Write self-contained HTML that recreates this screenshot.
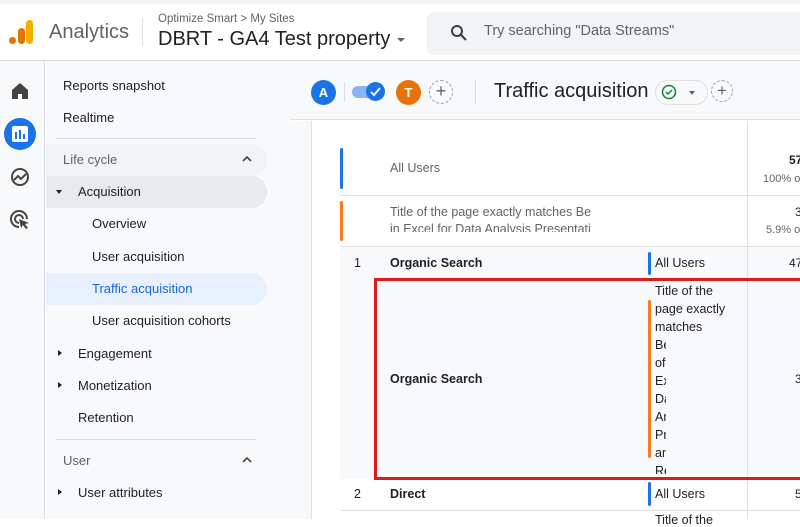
<!DOCTYPE html>
<html><head><meta charset="utf-8">
<style>
*{box-sizing:border-box;margin:0;padding:0}
body{width:800px;height:519px;overflow:hidden;background:#fff;font-family:"Liberation Sans",Arial,sans-serif;color:#202124;position:relative}
.a{position:absolute;white-space:nowrap}
.nav{font-size:13px;color:#202124}
.t{font-size:12.5px}
</style></head><body>
<div class="a" style="left:0;top:0;width:800px;height:4px;background:#f1f3f4"></div>
<div class="a" style="left:0;top:4px;width:800px;height:57px;background:#fff;border-bottom:1px solid #dadce0"></div>
<div class="a" style="left:9px;top:37px;width:7px;height:7px;border-radius:50%;background:#e37400"></div>
<div class="a" style="left:18px;top:28px;width:7px;height:16px;border-radius:3.5px;background:#e37400"></div>
<div class="a" style="left:26px;top:20px;width:7px;height:24px;border-radius:3.5px;background:#f9ab00"></div>
<div class="a" style="left:49px;top:21px;font-size:20px;color:#5f6368">Analytics</div>
<div class="a" style="left:142px;top:18px;width:1px;height:28px;background:#e0e0e0"></div>
<div class="a" style="left:158px;top:13px;font-size:11.5px;color:#5f6368">Optimize Smart &gt; My Sites</div>
<div class="a" style="left:158px;top:28px;font-size:20px;color:#202124">DBRT - GA4 Test property</div>
<div class="a" style="left:397px;top:38px;width:0;height:0;border-left:4px solid transparent;border-right:4px solid transparent;border-top:4px solid #5f6368"></div>
<div class="a" style="left:427px;top:12px;width:380px;height:43px;border-radius:7px;background:#f1f3f4"></div>
<svg class="a" style="left:450px;top:24px" width="18" height="18" viewBox="0 0 18 18"><circle cx="7" cy="7" r="5" fill="none" stroke="#3c4043" stroke-width="2"/><path d="M11 11l5 5" stroke="#3c4043" stroke-width="2.2"/></svg>
<div class="a" style="left:484px;top:23px;font-size:14.5px;color:#5f6368">Try searching "Data Streams"</div>
<div class="a" style="left:0;top:61px;width:45px;height:458px;background:#f8f9fa;border-right:1px solid #dadce0"></div>
<svg class="a" style="left:11px;top:82px" width="18" height="18" viewBox="0 0 18 18"><path d="M9 1L1 8v9h6v-5h4v5h6V8z" fill="#444"/></svg>
<div class="a" style="left:4px;top:118px;width:32px;height:32px;border-radius:50%;background:#1a73e8"></div>
<div class="a" style="left:12px;top:126px;width:16px;height:16px;border-radius:2px;background:#fff"></div>
<div class="a" style="left:15px;top:132px;width:2px;height:7px;background:#1a73e8"></div>
<div class="a" style="left:19px;top:130px;width:2px;height:9px;background:#1a73e8"></div>
<div class="a" style="left:23px;top:134px;width:2px;height:5px;background:#1a73e8"></div>
<svg class="a" style="left:10px;top:167px" width="20" height="20" viewBox="0 0 20 20"><circle cx="10" cy="10" r="8" fill="none" stroke="#444" stroke-width="2"/><path d="M4 13l4-4 3 3 5-5" fill="none" stroke="#444" stroke-width="2"/></svg>
<svg class="a" style="left:10px;top:210px" width="20" height="20" viewBox="0 0 20 20"><path d="M9 17A8 8 0 1 1 17 9" fill="none" stroke="#444" stroke-width="2"/><path d="M9 13A4 4 0 1 1 13 9" fill="none" stroke="#444" stroke-width="2"/><path d="M9 9l10 4-4 1 3 4-2 1-3-4-2 3z" fill="#444"/></svg>
<div class="a" style="left:46px;top:61px;width:244px;height:458px;background:#f8f9fa"></div>
<div class="a nav" style="left:63px;top:78px">Reports snapshot</div>
<div class="a nav" style="left:63px;top:110px">Realtime</div>
<div class="a" style="left:56px;top:138px;width:200px;height:1px;background:#dadce0"></div>
<div class="a" style="left:46px;top:144px;width:221px;height:32px;border-radius:0 16px 16px 0;background:#f1f3f4"></div>
<div class="a nav" style="left:63px;top:152px;color:#5f6368">Life cycle</div>
<svg class="a" style="left:242px;top:155px" width="10" height="7" viewBox="0 0 10 7"><path d="M1 6l4-4 4 4" fill="none" stroke="#444" stroke-width="1.6"/></svg>
<div class="a" style="left:46px;top:176px;width:221px;height:32px;border-radius:0 16px 16px 0;background:#e8eaed"></div>
<div class="a" style="left:56px;top:190px;border-left:3px solid transparent;border-right:3px solid transparent;border-top:4px solid #202124"></div>
<div class="a nav" style="left:78px;top:184px">Acquisition</div>
<div class="a nav" style="left:92px;top:216px">Overview</div>
<div class="a nav" style="left:92px;top:249px">User acquisition</div>
<div class="a" style="left:46px;top:273px;width:221px;height:32px;border-radius:0 16px 16px 0;background:#e8f0fe"></div>
<div class="a nav" style="left:92px;top:281px;color:#1967d2">Traffic acquisition</div>
<div class="a nav" style="left:92px;top:313px">User acquisition cohorts</div>
<div class="a" style="left:58px;top:350px;border-top:3px solid transparent;border-bottom:3px solid transparent;border-left:4px solid #202124"></div>
<div class="a nav" style="left:78px;top:346px">Engagement</div>
<div class="a" style="left:58px;top:382px;border-top:3px solid transparent;border-bottom:3px solid transparent;border-left:4px solid #202124"></div>
<div class="a nav" style="left:78px;top:378px">Monetization</div>
<div class="a nav" style="left:78px;top:410px">Retention</div>
<div class="a" style="left:56px;top:439px;width:200px;height:1px;background:#dadce0"></div>
<div class="a nav" style="left:63px;top:453px;color:#5f6368">User</div>
<svg class="a" style="left:242px;top:456px" width="10" height="7" viewBox="0 0 10 7"><path d="M1 6l4-4 4 4" fill="none" stroke="#444" stroke-width="1.6"/></svg>
<div class="a" style="left:58px;top:489px;border-top:3px solid transparent;border-bottom:3px solid transparent;border-left:4px solid #202124"></div>
<div class="a nav" style="left:78px;top:485px">User attributes</div>
<div class="a" style="left:290px;top:61px;width:510px;height:59px;background:#f8f9fa;border-bottom:1px solid #e0e0e0"></div>
<div class="a" style="left:311px;top:80px;width:25px;height:25px;border-radius:50%;background:#1a73e8;color:#fff;font-size:13px;font-weight:bold;text-align:center;line-height:25px">A</div>
<div class="a" style="left:344px;top:82px;width:1px;height:20px;background:#dadce0"></div>
<div class="a" style="left:352px;top:86px;width:26px;height:12px;border-radius:6px;background:#8ab4f8"></div>
<div class="a" style="left:366px;top:82px;width:19px;height:19px;border-radius:50%;background:#1a73e8"></div>
<svg class="a" style="left:369px;top:86px" width="13" height="11" viewBox="0 0 13 11"><path d="M2 6l3 3 6-7" fill="none" stroke="#fff" stroke-width="1.8"/></svg>
<div class="a" style="left:396px;top:80px;width:25px;height:25px;border-radius:50%;background:#e8710a;color:#fff;font-size:13px;font-weight:bold;text-align:center;line-height:25px">T</div>
<div class="a" style="left:429px;top:80px;width:24px;height:24px;border-radius:50%;border:1px dashed #9aa0a6;color:#5f6368;font-size:18px;text-align:center;line-height:21px">+</div>
<div class="a" style="left:475px;top:80px;width:1px;height:24px;background:#dadce0"></div>
<div class="a" style="left:494px;top:80px;font-size:20px;color:#202124">Traffic acquisition</div>
<div class="a" style="left:655px;top:80px;width:53px;height:25px;border-radius:13px;border:1px solid #e0e0e0;background:#f8f9fa"></div>
<svg class="a" style="left:661px;top:84px" width="16" height="16" viewBox="0 0 16 16"><circle cx="8" cy="8" r="6.5" fill="none" stroke="#188038" stroke-width="1.5"/><path d="M5 8l2 2 4-4" fill="none" stroke="#188038" stroke-width="1.5"/></svg>
<div class="a" style="left:689px;top:91px;border-left:3.5px solid transparent;border-right:3.5px solid transparent;border-top:4px solid #5f6368"></div>
<div class="a" style="left:711px;top:80px;width:22px;height:22px;border-radius:50%;border:1px dashed #9aa0a6;color:#5f6368;font-size:17px;text-align:center;line-height:19px">+</div>
<div class="a" style="left:290px;top:121px;width:510px;height:398px;background:#fff"></div>
<div class="a" style="left:290px;top:121px;width:22px;height:398px;background:#f8f9fa;border-right:1px solid #e0e0e0"></div>
<div class="a" style="left:747px;top:121px;width:1px;height:398px;background:#e0e0e0"></div>
<div class="a" style="left:340px;top:148px;width:3px;height:41px;background:#1a73e8;border-radius:2px"></div>
<div class="a t" style="left:390px;top:161px;color:#5f6368">All Users</div>
<div class="a" style="left:789px;top:153px;font-size:12px;font-weight:bold">57</div>
<div class="a" style="left:763px;top:173px;font-size:11px;color:#5f6368">100% of</div>
<div class="a" style="left:340px;top:195px;width:460px;height:1px;background:#e0e0e0"></div>
<div class="a" style="left:340px;top:201px;width:3px;height:40px;background:#fa7b17;border-radius:2px"></div>
<div class="a t" style="left:390px;top:205px;color:#5f6368">Title of the page exactly matches Be</div>
<div class="a t" style="left:390px;top:222px;color:#5f6368;height:10px;overflow:hidden">in Excel for Data Analysis Presentati</div>
<div class="a" style="left:795px;top:205px;font-size:12px">3</div>
<div class="a" style="left:766px;top:224px;font-size:11px;color:#5f6368">5.9% of</div>
<div class="a" style="left:340px;top:246px;width:460px;height:1px;background:#e0e0e0"></div>
<div class="a" style="left:340px;top:247px;width:460px;height:232px;background:#f8f9fa"></div>
<div class="a" style="left:747px;top:247px;width:1px;height:232px;background:#e0e0e0"></div>
<div class="a t" style="left:354px;top:256px">1</div>
<div class="a t" style="left:390px;top:256px;font-weight:bold">Organic Search</div>
<div class="a" style="left:648px;top:252px;width:3px;height:23px;background:#1a73e8;border-radius:2px"></div>
<div class="a t" style="left:655px;top:256px">All Users</div>
<div class="a" style="left:789px;top:256px;font-size:12px">47</div>
<div class="a" style="left:374px;top:278px;width:430px;height:202px;border:3px solid #e0191f"></div>
<div class="a t" style="left:390px;top:372px;font-weight:bold">Organic Search</div>
<div class="a" style="left:648px;top:300px;width:3px;height:158px;background:#fa7b17;border-radius:2px"></div>
<div class="a t" style="left:655px;top:282px;line-height:18px;white-space:normal;width:80px">Title of the<br>page exactly<br>matches</div>
<div class="a t" style="left:655px;top:336px;line-height:18px;white-space:normal;width:11px;overflow:hidden;height:138px">Be<br>of<br>Ex<br>Da<br>An<br>Pr<br>an<br>Reporting</div>
<div class="a" style="left:795px;top:372px;font-size:12px">3</div>
<div class="a t" style="left:354px;top:487px">2</div>
<div class="a t" style="left:390px;top:487px;font-weight:bold">Direct</div>
<div class="a" style="left:648px;top:482px;width:3px;height:24px;background:#1a73e8;border-radius:2px"></div>
<div class="a t" style="left:655px;top:487px">All Users</div>
<div class="a" style="left:795px;top:487px;font-size:12px">5</div>
<div class="a" style="left:340px;top:510px;width:460px;height:1px;background:#e0e0e0"></div>
<div class="a t" style="left:655px;top:513px">Title of the</div>
</body></html>
